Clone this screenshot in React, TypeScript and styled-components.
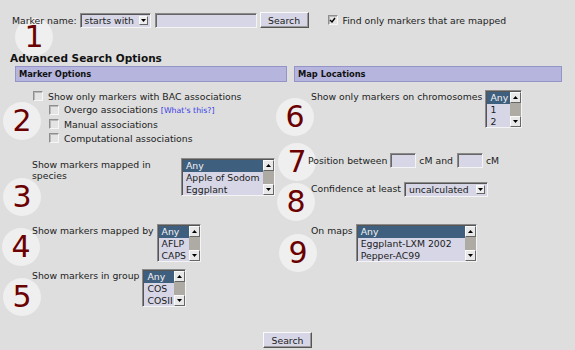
import styled, { createGlobalStyle } from "styled-components";

const GlobalStyle = createGlobalStyle`
    body {
        margin: 0;
        background: #dedede;
        font-family: "DejaVu Sans", "Liberation Sans", sans-serif;
        font-size: 9.3px;
        color: #1c1c1c;
    }
`;

const Page = styled.div`
    position: relative;
    isolation: isolate;
    width: 575px;
    height: 350px;
    padding-top: 12px;
    box-sizing: border-box;
    overflow: hidden;
`;

const TopRow = styled.div`
    display: flex;
    align-items: center;
    height: 16px;
    padding-left: 12px;
`;

const Text = styled.span<{ $ml?: number }>`
    margin-left: ${(p) => p.$ml ?? 0}px;
    white-space: nowrap;
    line-height: 11px;
`;

const SelectBox = styled.div<{ $w: number; $ml?: number }>`
    width: ${(p) => p.$w}px;
    height: 15px;
    margin-left: ${(p) => p.$ml ?? 0}px;
    box-sizing: border-box;
    display: flex;
    align-items: center;
    justify-content: space-between;
    padding: 0 2px 0 4px;
    background: #d6d6e6;
    border: 1px solid;
    border-color: #8a8a8a #f4f4f4 #f4f4f4 #8a8a8a;
    box-shadow: inset 1px 1px 0 #555;
    flex-shrink: 0;
`;

const DropBtn = styled.span`
    width: 9px;
    height: 9px;
    box-sizing: border-box;
    display: flex;
    align-items: center;
    justify-content: center;
    background: #ececec;
    border: 1px solid;
    border-color: #fafafa #666 #666 #fafafa;
`;

const TextInput = styled.input<{ $w: number; $ml?: number }>`
    width: ${(p) => p.$w}px;
    height: 15px;
    margin: 0 0 0 ${(p) => p.$ml ?? 0}px;
    padding: 0;
    box-sizing: border-box;
    background: #d6d6e6;
    border: 1px solid;
    border-color: #8a8a8a #f4f4f4 #f4f4f4 #8a8a8a;
    box-shadow: inset 1px 1px 0 #666;
    outline: none;
    flex-shrink: 0;
`;

const Button = styled.button<{ $ml?: number }>`
    height: 16px;
    width: 49px;
    margin: 0 0 0 ${(p) => p.$ml ?? 0}px;
    padding: 0;
    box-sizing: border-box;
    font-family: "DejaVu Sans", sans-serif;
    font-size: 9.3px;
    color: #1c1c1c;
    background: #d6d6e6;
    border: 1px solid;
    border-color: #fafafa #555 #555 #fafafa;
    box-shadow: inset -1px -1px 0 #9a9a9a;
    flex-shrink: 0;
`;

const Box = styled.span<{ $ml?: number }>`
    width: 10px;
    height: 10px;
    margin-left: ${(p) => p.$ml ?? 0}px;
    box-sizing: border-box;
    display: inline-flex;
    align-items: center;
    justify-content: center;
    background: #e4e4e4;
    border: 1px solid;
    border-color: #8e8e8e #f6f6f6 #f6f6f6 #8e8e8e;
    box-shadow: inset 1px 1px 0 #b8b8b8;
    flex-shrink: 0;
`;

const Title = styled.div`
    margin-top: 24px;
    padding-left: 10px;
    font-size: 10.5px;
    font-weight: bold;
    line-height: 12px;
    color: #111;
`;

const Columns = styled.div`
    display: grid;
    grid-template-columns: 272px 268px;
    column-gap: 7px;
    margin: 2px 0 0 15px;
`;

const Column = styled.div`
    display: flex;
    flex-direction: column;
`;

const SectionBar = styled.div`
    height: 16px;
    box-sizing: border-box;
    padding-left: 3px;
    background: #b5b5dd;
    border: 1px solid #9494c8;
    font-size: 8.3px;
    font-weight: bold;
    line-height: 14px;
    color: #111;
`;

const CheckRow = styled.div<{ $indent: number; $mt?: number }>`
    display: flex;
    align-items: center;
    height: 14px;
    margin-top: ${(p) => p.$mt ?? 0}px;
    padding-left: ${(p) => p.$indent}px;
    gap: 5px;
`;

const Help = styled.span`
    color: #3c3ce6;
    font-size: 7.8px;
    margin-left: 3px;
`;

const Field = styled.div<{ $mt: number; $center?: boolean; $indent?: number }>`
    display: flex;
    align-items: ${(p) => (p.$center ? "center" : "flex-start")};
    margin-top: ${(p) => p.$mt}px;
    padding-left: ${(p) => p.$indent ?? 17}px;
`;

const FieldLabel = styled.div<{ $w?: number }>`
    width: ${(p) => (p.$w ? `${p.$w}px` : "auto")};
    margin-right: ${(p) => (p.$w ? 0 : 3)}px;
    padding-top: 1px;
    line-height: 11px;
    white-space: ${(p) => (p.$w ? "normal" : "nowrap")};
    flex-shrink: 0;
`;

const ListBox = styled.div<{ $w: number }>`
    width: ${(p) => p.$w}px;
    height: 38px;
    box-sizing: border-box;
    display: flex;
    background: #d6d6e6;
    border: 1px solid;
    border-color: #8a8a8a #f4f4f4 #f4f4f4 #8a8a8a;
    box-shadow: inset 1px 1px 0 #555;
    padding: 1px 0 0 1px;
    flex-shrink: 0;
`;

const Options = styled.div`
    flex: 1;
    min-width: 0;
    overflow: hidden;
`;

const Option = styled.div<{ $sel?: boolean }>`
    height: 12px;
    line-height: 12px;
    padding-left: 3px;
    white-space: nowrap;
    background: ${(p) => (p.$sel ? "#3f5f7f" : "transparent")};
    color: ${(p) => (p.$sel ? "#f4f4f4" : "#1c1c1c")};
`;

const Scroll = styled.div`
    width: 11px;
    display: flex;
    flex-direction: column;
    background: #aeaba4;
`;

const ScrollBtn = styled.span`
    width: 11px;
    height: 11px;
    box-sizing: border-box;
    display: flex;
    align-items: center;
    justify-content: center;
    background: #e8e8e8;
    border: 1px solid;
    border-color: #fafafa #666 #666 #fafafa;
`;

const Track = styled.span`
    flex: 1;
`;

const Footer = styled.div`
    display: flex;
    justify-content: center;
    margin-top: 25px;
`;

// annotation badges sit behind the form, like a highlight layer
const Badge = styled.div<{ $x: number; $y: number }>`
    position: absolute;
    z-index: -1;
    left: ${(p) => p.$x - 19}px;
    top: ${(p) => p.$y - 19}px;
    width: 38px;
    height: 38px;
    border-radius: 50%;
    background: #efefef;
    color: #6b0000;
    font-family: "DejaVu Sans", sans-serif;
    font-size: 30px;
    line-height: 38px;
    text-align: center;
`;

const Tri = ({ up }: { up?: boolean }) => (
    <svg width="5" height="3" viewBox="0 0 5 3">
        <path d={up ? "M0 3 L2.5 0 L5 3 Z" : "M0 0 L5 0 L2.5 3 Z"} fill="#000" />
    </svg>
);

const Check = ({ checked, ml }: { checked?: boolean; ml?: number }) => (
    <Box $ml={ml}>
        {checked && (
            <svg width="7" height="6" viewBox="0 0 7 6">
                <path d="M1 3 L3 5 L6 1" stroke="#000" strokeWidth="1.4" fill="none" />
            </svg>
        )}
    </Box>
);

const List = ({ w, items }: { w: number; items: string[] }) => (
    <ListBox $w={w}>
        <Options>
            {items.map((item, i) => (
                <Option key={item} $sel={i === 0}>
                    {item}
                </Option>
            ))}
        </Options>
        <Scroll>
            <ScrollBtn>
                <Tri up />
            </ScrollBtn>
            <Track />
            <ScrollBtn>
                <Tri />
            </ScrollBtn>
        </Scroll>
    </ListBox>
);

const Select = ({ w, value, ml }: { w: number; value: string; ml?: number }) => (
    <SelectBox $w={w} $ml={ml}>
        <span>{value}</span>
        <DropBtn>
            <Tri />
        </DropBtn>
    </SelectBox>
);

const badges: [string, number, number][] = [
    ["1", 34, 37],
    ["2", 22, 121],
    ["3", 22, 197],
    ["4", 21, 247],
    ["5", 22, 297],
    ["6", 295, 117],
    ["7", 297, 162],
    ["8", 296, 202],
    ["9", 298, 253],
];

export default function App() {
    return (
        <Page>
            <GlobalStyle />
            <TopRow>
                <Text>Marker name:</Text>
                <Select w={71} value="starts with" ml={3} />
                <TextInput $w={102} $ml={4} />
                <Button $ml={3}>Search</Button>
                <Check checked ml={19} />
                <Text $ml={5}>Find only markers that are mapped</Text>
            </TopRow>

            <Title>Advanced Search Options</Title>

            <Columns>
                <Column>
                    <SectionBar>Marker Options</SectionBar>
                    <CheckRow $indent={18} $mt={7}>
                        <Check />
                        <Text>Show only markers with BAC associations</Text>
                    </CheckRow>
                    <CheckRow $indent={34}>
                        <Check />
                        <Text>
                            Overgo associations<Help>[What's this?]</Help>
                        </Text>
                    </CheckRow>
                    <CheckRow $indent={34}>
                        <Check />
                        <Text>Manual associations</Text>
                    </CheckRow>
                    <CheckRow $indent={34}>
                        <Check />
                        <Text>Computational associations</Text>
                    </CheckRow>

                    <Field $mt={13}>
                        <FieldLabel $w={149}>Show markers mapped in species</FieldLabel>
                        <List w={94} items={["Any", "Apple of Sodom", "Eggplant"]} />
                    </Field>
                    <Field $mt={28}>
                        <FieldLabel>Show markers mapped by</FieldLabel>
                        <List w={44} items={["Any", "AFLP", "CAPS"]} />
                    </Field>
                    <Field $mt={7}>
                        <FieldLabel>Show markers in group</FieldLabel>
                        <List w={44} items={["Any", "COS", "COSII"]} />
                    </Field>
                </Column>

                <Column>
                    <SectionBar>Map Locations</SectionBar>
                    <Field $mt={8}>
                        <FieldLabel>Show only markers on chromosomes</FieldLabel>
                        <List w={37} items={["Any", "1", "2"]} />
                    </Field>
                    <Field $mt={25} $center $indent={14}>
                        <Text>Position between</Text>
                        <TextInput $w={26} $ml={3} />
                        <Text $ml={3}>cM and</Text>
                        <TextInput $w={26} $ml={4} />
                        <Text $ml={3}>cM</Text>
                    </Field>
                    <Field $mt={14}>
                        <FieldLabel>Confidence at least</FieldLabel>
                        <Select w={84} value="uncalculated" />
                    </Field>
                    <Field $mt={27}>
                        <FieldLabel>On maps</FieldLabel>
                        <List w={121} items={["Any", "Eggplant-LXM 2002", "Pepper-AC99"]} />
                    </Field>
                </Column>
            </Columns>

            <Footer>
                <Button>Search</Button>
            </Footer>

            {badges.map(([n, x, y]) => (
                <Badge key={n} $x={x} $y={y}>
                    {n}
                </Badge>
            ))}
        </Page>
    );
}
